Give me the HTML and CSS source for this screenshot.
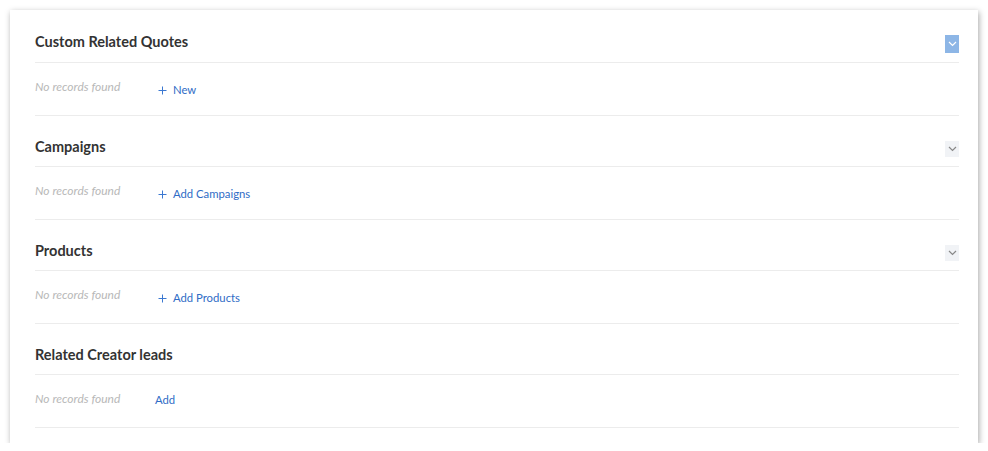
FILE: index.html
```html
<!DOCTYPE html>
<html>
<head>
<meta charset="utf-8">
<link rel="stylesheet" href="styles.css">
</head>
<body>
<div class="card">
  <section class="sec">
    <div class="sec-head">
      <h2 class="title">Custom Related Quotes</h2>
      <span class="toggle toggle-active"><svg width="9" height="6" viewBox="0 0 9 6"><path d="M1 1l3.5 3.5L8 1" fill="none" stroke="#fff" stroke-width="1.2"/></svg></span>
    </div>
    <div class="sec-body">
      <span class="empty">No records found</span>
      <a class="action"><svg class="plus" width="9" height="9" viewBox="0 0 9 9"><path d="M4.5 0.5v8M0.5 4.5h8" stroke="#3b78d1" stroke-width="1"/></svg>New</a>
    </div>
  </section>
  <section class="sec">
    <div class="sec-head">
      <h2 class="title">Campaigns</h2>
      <span class="toggle"><svg width="9" height="6" viewBox="0 0 9 6"><path d="M1 1l3.5 3.5L8 1" fill="none" stroke="#888" stroke-width="1.2"/></svg></span>
    </div>
    <div class="sec-body">
      <span class="empty">No records found</span>
      <a class="action"><svg class="plus" width="9" height="9" viewBox="0 0 9 9"><path d="M4.5 0.5v8M0.5 4.5h8" stroke="#3b78d1" stroke-width="1"/></svg>Add Campaigns</a>
    </div>
  </section>
  <section class="sec">
    <div class="sec-head">
      <h2 class="title">Products</h2>
      <span class="toggle"><svg width="9" height="6" viewBox="0 0 9 6"><path d="M1 1l3.5 3.5L8 1" fill="none" stroke="#888" stroke-width="1.2"/></svg></span>
    </div>
    <div class="sec-body">
      <span class="empty">No records found</span>
      <a class="action"><svg class="plus" width="9" height="9" viewBox="0 0 9 9"><path d="M4.5 0.5v8M0.5 4.5h8" stroke="#3b78d1" stroke-width="1"/></svg>Add Products</a>
    </div>
  </section>
  <section class="sec">
    <div class="sec-head">
      <h2 class="title">Related Creator leads</h2>
    </div>
    <div class="sec-body">
      <span class="empty">No records found</span>
      <a class="action action-plain">Add</a>
    </div>
  </section>
</div>
</body>
</html>
```

FILE: styles.css
```css
html, body {
  margin: 0;
  padding: 0;
  background: #ffffff;
}
body {
  padding: 10px 10px 0 10px;
  font-family: "Lato", "Open Sans", sans-serif;
}
.card {
  width: 968px;
  box-sizing: border-box;
  padding: 0 19px 15px 25px;
  background: #fff;
  box-shadow: 1px 2px 6px rgba(0, 0, 0, 0.35);
}
.sec-head {
  display: flex;
  align-items: center;
  justify-content: space-between;
  padding: 21px 0 9px 0;
  border-bottom: 1px solid #ececec;
}
.title {
  margin: 0;
  font-size: 14.5px;
  line-height: 20px;
  font-weight: 700;
  color: #333;
}
.toggle {
  display: flex;
  align-items: center;
  justify-content: center;
  width: 14px;
  height: 16px;
  margin-top: 4px;
  background: #f1f3f6;
}
.toggle-active {
  height: 18px;
  margin-top: 4px;
  background: #8db6e6;
}
.sec-body {
  display: flex;
  align-items: flex-start;
  height: 36px;
  padding-top: 16px;
  border-bottom: 1px solid #ececec;
}
.empty {
  width: 120px;
  font-size: 12px;
  line-height: 16px;
  font-style: italic;
  color: #b8b8b8;
}
.action {
  display: flex;
  align-items: center;
  font-size: 11.3px;
  line-height: 16px;
  color: #2f6cc6;
  margin-top: 3px;
}
.plus {
  margin: 0 6px 0 3px;
}
.action-plain {
  margin-top: 1px;
}
```
